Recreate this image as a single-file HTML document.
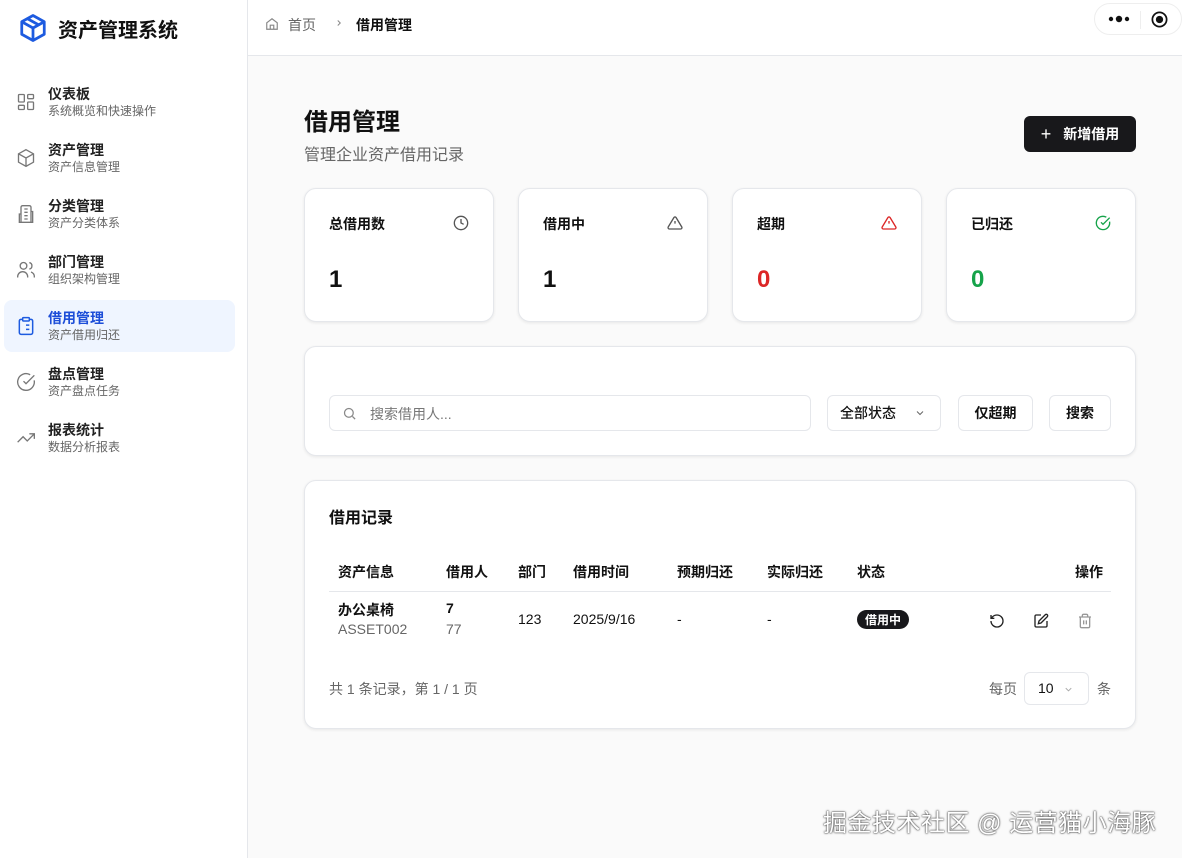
<!DOCTYPE html>
<html><head><meta charset="utf-8"><style>
*{box-sizing:border-box;margin:0;padding:0}
body{width:1182px;height:858px;overflow:hidden;font-family:"Liberation Sans","Noto Sans CJK SC",sans-serif;background:#fafafa;color:#111;position:relative}
.side{position:absolute;left:0;top:0;width:248px;height:858px;background:#fff;border-right:1px solid #e5e7eb}
.logo{position:absolute;left:18px;top:12px;display:flex;align-items:center;gap:10px;font-size:20px;font-weight:700}
.nav{position:absolute;left:4px;top:76px;width:231px}
.item{height:52px;margin-bottom:4px;border-radius:8px;display:flex;align-items:center;padding-left:12px;position:relative}
.item svg{width:20px;height:20px;margin-right:12px;flex:none}
.item b{display:block;font-size:14px;font-weight:600;color:#222;line-height:18px}
.item small{display:block;font-size:12px;color:#666;line-height:16px}
.item.act{background:#eff5ff}
.item.act b{color:#1d4ed8}
.top{position:absolute;left:248px;top:0;right:0;height:56px;background:#fff;border-bottom:1px solid #e5e7eb;font-size:14px}
.card{position:absolute;background:#fff;border:1px solid #e5e7eb;border-radius:12px;box-shadow:0 1px 3px rgba(0,0,0,.08)}
.stat .t{position:absolute;left:24px;top:25px;font-size:14px;font-weight:600}
.stat .v{position:absolute;left:24px;top:77px;font-size:24px;font-weight:700}
.stat svg{position:absolute;right:24px;top:26px;width:16px;height:16px}
.btn{position:absolute;border:1px solid #e5e7eb;border-radius:6px;background:#fff;font-size:14px;font-weight:600;display:flex;align-items:center;justify-content:center;height:36px;top:48px}
</style></head><body>
<div class="side">
<div class="logo"><svg width="30" height="32" viewBox="0 0 24 24" fill="none" stroke="#1d5be0" stroke-width="2.2" stroke-linejoin="round"><path d="M12 2 21 7v10l-9 5-9-5V7z"/><path d="M3 7l9 5 9-5M12 12v10M7.5 4.5l9 5"/></svg>资产管理系统</div>
<div class="nav">
<div class="item"><svg viewBox="0 0 24 24" fill="none" stroke="#777" stroke-width="1.6"><rect x="3" y="3" width="7" height="9" rx="1"/><rect x="14" y="3" width="7" height="5" rx="1"/><rect x="14" y="12" width="7" height="9" rx="1"/><rect x="3" y="16" width="7" height="5" rx="1"/></svg><div><b>仪表板</b><small>系统概览和快速操作</small></div></div>
<div class="item"><svg viewBox="0 0 24 24" fill="none" stroke="#777" stroke-width="1.6"><path d="M12 2 21 7v10l-9 5-9-5V7z"/><path d="M3 7l9 5 9-5M12 12v10"/></svg><div><b>资产管理</b><small>资产信息管理</small></div></div>
<div class="item"><svg viewBox="0 0 24 24" fill="none" stroke="#777" stroke-width="1.6"><path d="M6 22V4a2 2 0 0 1 2-2h8a2 2 0 0 1 2 2v18zM6 12H4v10h2M18 9h2v13h-2M10 6h4M10 10h4M10 14h4M10 18h4"/></svg><div><b>分类管理</b><small>资产分类体系</small></div></div>
<div class="item"><svg viewBox="0 0 24 24" fill="none" stroke="#777" stroke-width="1.6"><circle cx="9" cy="7" r="4"/><path d="M2 21v-1a6 6 0 0 1 12 0v1M16 3.1a4 4 0 0 1 0 7.8M22 21v-1a6 6 0 0 0-4-5.6"/></svg><div><b>部门管理</b><small>组织架构管理</small></div></div>
<div class="item act"><svg viewBox="0 0 24 24" fill="none" stroke="#1d5be0" stroke-width="1.8"><rect x="8" y="2" width="8" height="4" rx="1"/><path d="M16 4h2a2 2 0 0 1 2 2v14a2 2 0 0 1-2 2H6a2 2 0 0 1-2-2V6a2 2 0 0 1 2-2h2M12 11h4M12 16h4M8 11h.01M8 16h.01"/></svg><div><b>借用管理</b><small>资产借用归还</small></div></div>
<div class="item"><svg viewBox="0 0 24 24" fill="none" stroke="#777" stroke-width="1.6"><path d="M21.8 10A10 10 0 1 1 17 3.3"/><path d="m9 11 3 3L22 4"/></svg><div><b>盘点管理</b><small>资产盘点任务</small></div></div>
<div class="item"><svg viewBox="0 0 24 24" fill="none" stroke="#777" stroke-width="1.6"><path d="m22 7-8.5 8.5-5-5L2 17M16 7h6v6"/></svg><div><b>报表统计</b><small>数据分析报表</small></div></div>
</div></div>
<div class="top">
<svg style="position:absolute;left:17px;top:17px" width="14" height="14" viewBox="0 0 24 24" fill="none" stroke="#888" stroke-width="2"><path d="M3 10l9-7 9 7v11H3z"/><path d="M9 21v-7h6v7"/></svg>
<span style="position:absolute;left:40px;top:15px;color:#666">首页</span>
<svg style="position:absolute;left:86px;top:18px" width="10" height="10" viewBox="0 0 24 24" fill="none" stroke="#888" stroke-width="2.5"><path d="m9 6 6 6-6 6"/></svg>
<span style="position:absolute;left:108px;top:15px;font-weight:600">借用管理</span>
<div style="position:absolute;right:0;top:3px;width:88px;height:32px;border:1px solid #eee;border-radius:16px;background:#fff">
<svg style="position:absolute;left:13px;top:11px" width="22" height="8" viewBox="0 0 22 8"><circle cx="3" cy="4" r="2.2" fill="#111"/><circle cx="11" cy="4" r="3.2" fill="#111"/><circle cx="19" cy="4" r="2.2" fill="#111"/></svg>
<span style="position:absolute;left:45px;top:7px;width:1px;height:18px;background:#eee"></span>
<svg style="position:absolute;left:55px;top:6px" width="19" height="19" viewBox="0 0 24 24" fill="none" stroke="#111" stroke-width="2.2"><circle cx="12" cy="12" r="9"/><circle cx="12" cy="12" r="3.5" fill="#111"/></svg></div>
</div>
<div style="position:absolute;left:304px;top:102px;font-size:24px;font-weight:700">借用管理</div>
<div style="position:absolute;left:304px;top:141px;font-size:16px;color:#666">管理企业资产借用记录</div>
<div style="position:absolute;left:1024px;top:116px;width:112px;height:36px;background:#18181b;color:#fff;border-radius:6px;font-size:14px;font-weight:600;display:flex;align-items:center;justify-content:center;gap:12px"><span style="font-size:18px;font-weight:400">+</span>新增借用</div>
<div class="card stat" style="left:304px;top:188px;width:190px;height:134px"><div class="t">总借用数</div><svg viewBox="0 0 24 24" fill="none" stroke="#555" stroke-width="2"><circle cx="12" cy="12" r="10"/><path d="M12 6v6l4 2"/></svg><div class="v">1</div></div>
<div class="card stat" style="left:518px;top:188px;width:190px;height:134px"><div class="t">借用中</div><svg viewBox="0 0 24 24" fill="none" stroke="#555" stroke-width="2"><path d="M10.3 3.9 1.8 18a2 2 0 0 0 1.7 3h17a2 2 0 0 0 1.7-3L13.7 3.9a2 2 0 0 0-3.4 0zM12 9v4M12 17h.01"/></svg><div class="v">1</div></div>
<div class="card stat" style="left:732px;top:188px;width:190px;height:134px"><div class="t">超期</div><svg viewBox="0 0 24 24" fill="none" stroke="#dc2626" stroke-width="2"><path d="M10.3 3.9 1.8 18a2 2 0 0 0 1.7 3h17a2 2 0 0 0 1.7-3L13.7 3.9a2 2 0 0 0-3.4 0zM12 9v4M12 17h.01"/></svg><div class="v" style="color:#dc2626">0</div></div>
<div class="card stat" style="left:946px;top:188px;width:190px;height:134px"><div class="t">已归还</div><svg viewBox="0 0 24 24" fill="none" stroke="#16a34a" stroke-width="2"><path d="M21.8 10A10 10 0 1 1 17 3.3"/><path d="m9 11 3 3L22 4"/></svg><div class="v" style="color:#16a34a">0</div></div>
<div class="card" style="left:304px;top:346px;width:832px;height:110px">
<div style="position:absolute;left:24px;top:48px;width:482px;height:36px;border:1px solid #e5e7eb;border-radius:6px">
<svg style="position:absolute;left:12px;top:10px" width="15" height="15" viewBox="0 0 24 24" fill="none" stroke="#888" stroke-width="2"><circle cx="11" cy="11" r="7"/><path d="m21 21-4.3-4.3"/></svg>
<span style="position:absolute;left:40px;top:8px;font-size:14px;color:#777">搜索借用人...</span></div>
<div class="btn" style="left:522px;width:114px;justify-content:flex-start;padding-left:12px;font-weight:500">全部状态<svg style="position:absolute;right:14px" width="12" height="12" viewBox="0 0 24 24" fill="none" stroke="#666" stroke-width="2"><path d="m6 9 6 6 6-6"/></svg></div>
<div class="btn" style="left:653px;width:75px">仅超期</div>
<div class="btn" style="left:744px;width:62px">搜索</div>
</div>
<div class="card" style="left:304px;top:480px;width:832px;height:249px">
<div style="position:absolute;left:24px;top:23px;font-size:16px;font-weight:600">借用记录</div>
<div style="position:absolute;left:24px;top:110px;width:782px;height:1px;background:#e5e7eb"></div>
<div style="position:absolute;top:81px;font-size:14px;font-weight:600;width:100%">
<span style="position:absolute;left:33px">资产信息</span><span style="position:absolute;left:141px">借用人</span><span style="position:absolute;left:213px">部门</span><span style="position:absolute;left:268px">借用时间</span><span style="position:absolute;left:372px">预期归还</span><span style="position:absolute;left:462px">实际归还</span><span style="position:absolute;left:552px">状态</span><span style="position:absolute;left:770px">操作</span></div>
<div style="position:absolute;top:119px;font-size:14px;width:100%">
<span style="position:absolute;left:33px;font-weight:600">办公桌椅</span><span style="position:absolute;left:33px;top:21px;color:#666">ASSET002</span>
<span style="position:absolute;left:141px;font-weight:600">7</span><span style="position:absolute;left:141px;top:21px;color:#666">77</span>
<span style="position:absolute;left:213px;top:11px">123</span><span style="position:absolute;left:268px;top:11px">2025/9/16</span><span style="position:absolute;left:372px;top:11px">-</span><span style="position:absolute;left:462px;top:11px">-</span>
<span style="position:absolute;left:552px;top:10px;background:#18181b;color:#fff;font-size:12px;font-weight:600;padding:1px 8px;border-radius:10px">借用中</span>
<svg style="position:absolute;left:684px;top:13px" width="16" height="16" viewBox="0 0 24 24" fill="none" stroke="#222" stroke-width="2"><path d="M3 12a9 9 0 1 0 9-9 9.7 9.7 0 0 0-6.7 2.7L3 8M3 3v5h5"/></svg>
<svg style="position:absolute;left:728px;top:13px" width="16" height="16" viewBox="0 0 24 24" fill="none" stroke="#222" stroke-width="2"><path d="M12 3H5a2 2 0 0 0-2 2v14a2 2 0 0 0 2 2h14a2 2 0 0 0 2-2v-7"/><path d="M18.4 2.6a2.1 2.1 0 0 1 3 3L12 15l-4 1 1-4z"/></svg>
<svg style="position:absolute;left:772px;top:13px" width="16" height="16" viewBox="0 0 24 24" fill="none" stroke="#999" stroke-width="2"><path d="M3 6h18M19 6v14a2 2 0 0 1-2 2H7a2 2 0 0 1-2-2V6M8 6V4a2 2 0 0 1 2-2h4a2 2 0 0 1 2 2v2M10 11v6M14 11v6"/></svg>
</div>
<div style="position:absolute;left:24px;top:198px;font-size:14px;color:#666">共 1 条记录，第 1 / 1 页</div>
<div style="position:absolute;left:684px;top:198px;font-size:14px;color:#666">每页</div>
<div style="position:absolute;left:719px;top:191px;width:65px;height:33px;border:1px solid #e5e7eb;border-radius:6px;font-size:14px"><span style="position:absolute;left:13px;top:7px">10</span><svg style="position:absolute;left:38px;top:11px" width="11" height="11" viewBox="0 0 24 24" fill="none" stroke="#aaa" stroke-width="2"><path d="m6 9 6 6 6-6"/></svg></div>
<div style="position:absolute;left:792px;top:198px;font-size:14px;color:#666">条</div>
</div>
<div style="position:absolute;left:823px;top:803px;font-size:24px;letter-spacing:0.5px;color:#fff;text-shadow:0 0 2px #333,0 0 1px #333;white-space:nowrap">掘金技术社区 @ 运营猫小海豚</div>
</body></html>
